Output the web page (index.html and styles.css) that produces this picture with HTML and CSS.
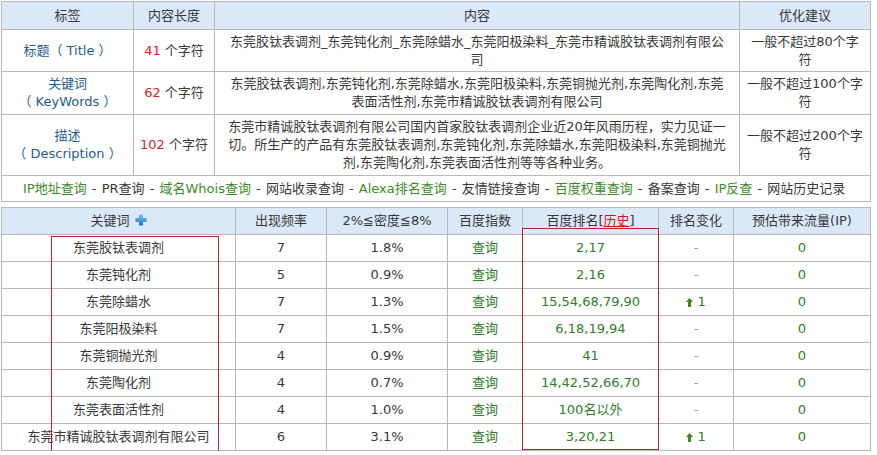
FILE: index.html
```html
<!DOCTYPE html>
<html lang="zh-CN">
<head>
<meta charset="utf-8">
<title>SEO</title>
<link rel="stylesheet" href="styles.css">
</head>
<body>
<div class="page">
  <table class="meta">
    <colgroup><col class="m1"><col class="m2"><col class="m3"><col class="m4"></colgroup>
    <tr class="hd"><th>标签</th><th>内容长度</th><th>内容</th><th>优化建议</th></tr>
    <tr class="r2">
      <td class="lbl">标题（ Title ）</td>
      <td><span class="num">41</span> 个字符</td>
      <td>东莞胶钛表调剂_东莞钝化剂_东莞除蜡水_东莞阳极染料_东莞市精诚胶钛表调剂有限公<br>司</td>
      <td>一般不超过80个字<br>符</td>
    </tr>
    <tr class="r2b">
      <td class="lbl">关键词<br>（ KeyWords ）</td>
      <td><span class="num">62</span> 个字符</td>
      <td>东莞胶钛表调剂,东莞钝化剂,东莞除蜡水,东莞阳极染料,东莞铜抛光剂,东莞陶化剂,东莞<br>表面活性剂,东莞市精诚胶钛表调剂有限公司</td>
      <td>一般不超过100个字<br>符</td>
    </tr>
    <tr class="r3">
      <td class="lbl">描述<br>（ Description ）</td>
      <td><span class="num">102</span> 个字符</td>
      <td>东莞市精诚胶钛表调剂有限公司国内首家胶钛表调剂企业近20年风雨历程，实力见证一<br>切。所生产的产品有东莞胶钛表调剂,东莞钝化剂,东莞除蜡水,东莞阳极染料,东莞铜抛光<br>剂,东莞陶化剂,东莞表面活性剂等等各种业务。</td>
      <td>一般不超过200个字<br>符</td>
    </tr>
    <tr class="rl">
      <td colspan="4" class="links"><span class="g">IP地址查询</span> - PR查询 - <span class="g">域名Whois查询</span> - 网站收录查询 - <span class="g">Alexa排名查询</span> - 友情链接查询 - <span class="g">百度权重查询</span> - 备案查询 - <span class="g">IP反查</span> - 网站历史记录</td>
    </tr>
  </table>

  <table class="kw">
    <colgroup><col class="k1"><col class="k2"><col class="k3"><col class="k4"><col class="k5"><col class="k6"><col class="k7"></colgroup>
    <tr class="hd">
      <th>关键词 <svg class="plus" width="12" height="12" viewBox="0 0 12 12"><defs><linearGradient id="pg" x1="0" y1="0" x2="0" y2="1"><stop offset="0" stop-color="#7cc3f5"/><stop offset="1" stop-color="#1d74cf"/></linearGradient></defs><path d="M4 0.5h4v3.5h3.5v4h-3.5v3.5h-4v-3.5h-3.5v-4h3.5z" fill="url(#pg)"/></svg></th>
      <th>出现频率</th><th>2%≦密度≦8%</th><th>百度指数</th><th>百度排名[<span class="hist">历史</span>]</th><th>排名变化</th><th>预估带来流量(IP)</th>
    </tr>
    <tr><td class="kwd">东莞胶钛表调剂</td><td>7</td><td>1.8%</td><td class="g">查询</td><td class="g">2,17</td><td class="dash">-</td><td class="g">0</td></tr>
    <tr><td class="kwd">东莞钝化剂</td><td>5</td><td>0.9%</td><td class="g">查询</td><td class="g">2,16</td><td class="dash">-</td><td class="g">0</td></tr>
    <tr><td class="kwd">东莞除蜡水</td><td>7</td><td>1.3%</td><td class="g">查询</td><td class="g">15,54,68,79,90</td><td class="g"><svg class="up" width="7" height="9" viewBox="0 0 7 9"><path d="M3.5 0L7 4H5V9H2V4H0Z" fill="#3b8b1f"/></svg> 1</td><td class="g">0</td></tr>
    <tr><td class="kwd">东莞阳极染料</td><td>7</td><td>1.5%</td><td class="g">查询</td><td class="g">6,18,19,94</td><td class="dash">-</td><td class="g">0</td></tr>
    <tr><td class="kwd">东莞铜抛光剂</td><td>4</td><td>0.9%</td><td class="g">查询</td><td class="g">41</td><td class="dash">-</td><td class="g">0</td></tr>
    <tr><td class="kwd">东莞陶化剂</td><td>4</td><td>0.7%</td><td class="g">查询</td><td class="g">14,42,52,66,70</td><td class="dash">-</td><td class="g">0</td></tr>
    <tr><td class="kwd">东莞表面活性剂</td><td>4</td><td>1.0%</td><td class="g">查询</td><td class="g">100名以外</td><td class="dash">-</td><td class="g">0</td></tr>
    <tr><td class="kwd">东莞市精诚胶钛表调剂有限公司</td><td>6</td><td>3.1%</td><td class="g">查询</td><td class="g">3,20,21</td><td class="g"><svg class="up" width="7" height="9" viewBox="0 0 7 9"><path d="M3.5 0L7 4H5V9H2V4H0Z" fill="#3b8b1f"/></svg> 1</td><td class="g">0</td></tr>
  </table>

  <div class="box box1"></div>
  <div class="box box2"></div>
</div>
</body>
</html>
```

FILE: styles.css
```css
html, body {
  margin: 0;
  padding: 0;
  background: #fff;
}
body {
  font-family: "DejaVu Sans", "Noto Sans CJK SC", sans-serif;
  font-size: 13px;
  color: #383838;
}
.page {
  position: relative;
  padding: 1px 0 0 1px;
  width: 876px;
}
table {
  border-collapse: collapse;
  table-layout: fixed;
}
th, td {
  border: 1px solid #b9b9b9;
  padding: 0 4px;
  text-align: center;
  vertical-align: middle;
  line-height: 18px;
  font-weight: normal;
  white-space: nowrap;
}
th {
  background: #dae8f8;
  color: #383838;
}

/* top table */
.meta { width: 869px; }
.m1 { width: 132px; }
.m2 { width: 81px; }
.m3 { width: 525px; }
.m4 { width: 131px; }
.meta .hd th { height: 27px; }
.meta .r2 td { height: 41px; }
.meta .r2b td { height: 42px; }
.meta .r3 td { height: 60px; }
.meta .rl td { height: 25px; }
.lbl { color: #245c92; }
.num { color: #d81e1e; }
.links {
  text-align: left;
  padding-left: 21px;
  word-spacing: 1px;
}
.links .g { color: #3d8a2a; }

/* keyword table */
.kw {
  width: 869px;
  margin-top: 5px;
}
.k1 { width: 234px; }
.k2 { width: 91px; }
.k3 { width: 121px; }
.k4 { width: 75px; }
.k5 { width: 136px; }
.k6 { width: 75px; }
.k7 { width: 137px; }
.kw .hd th { height: 26px; }
.kw td { height: 26px; }
.kw .g { color: #2f7d2a; }
.dash { color: #999; }
.hist {
  color: #e01010;
  text-decoration: underline;
}
.plus {
  vertical-align: -1px;
  margin-left: 1px;
}
.up {
  vertical-align: -1px;
}

/* highlight boxes */
.box {
  position: absolute;
  border: 1px solid #c0212b;
  box-sizing: border-box;
}
.box1 {
  left: 51px;
  top: 236px;
  width: 168px;
  height: 218px;
}
.box2 {
  left: 522px;
  top: 228px;
  width: 137px;
  height: 222px;
}
```
